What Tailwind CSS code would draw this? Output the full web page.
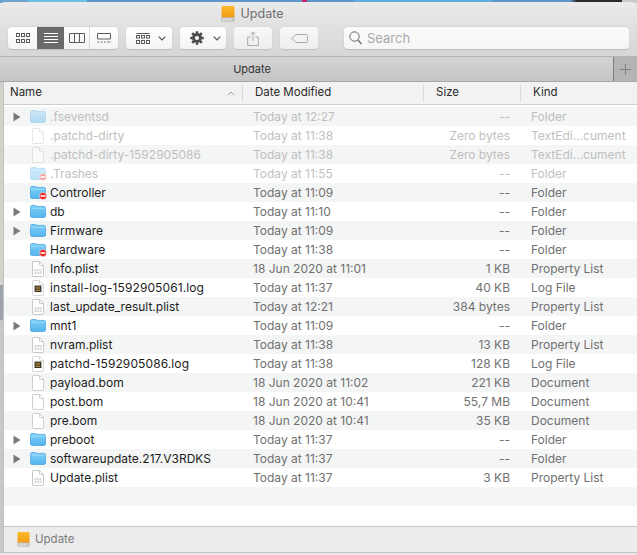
<!DOCTYPE html>
<html><head><meta charset="utf-8"><script src="https://cdn.jsdelivr.net/npm/@tailwindcss/browser@4"></script></head>
<body class="m-0 overflow-hidden">
<svg class="absolute w-0 h-0">
<defs>
<linearGradient id="fg" x1="0" y1="0" x2="0" y2="1"><stop offset="0" stop-color="#7fd0f8"/><stop offset="1" stop-color="#55b4ee"/></linearGradient>
<linearGradient id="dg" x1="0" y1="0" x2="0" y2="1"><stop offset="0" stop-color="#fbb92c"/><stop offset="1" stop-color="#f39a12"/></linearGradient>
<symbol id="folder" viewBox="0 0 16 13"><path d="M.5 2.2C.5 1 1.2.5 2 .5h3.6c.8 0 1 .9 1.9.9H14c1 0 1.5.6 1.5 1.5v8.2c0 .9-.6 1.4-1.5 1.4H2c-.9 0-1.5-.5-1.5-1.4z" fill="url(#fg)" stroke="#3f9edb" stroke-width=".7"/><path d="M.8 3.3h14.4" stroke="#a5e0fb" stroke-width=".8"/></symbol>
<symbol id="doc" viewBox="0 0 12 16"><path d="M.5 1.2c0-.4.3-.7.7-.7h6.3l4 4v10.3c0 .4-.3.7-.7.7H1.2c-.4 0-.7-.3-.7-.7z" fill="#fff" stroke="#cfcfcf"/><path d="M7.5.5v3.2c0 .5.3.8.8.8h3.2" fill="none" stroke="#cfcfcf"/></symbol>
<symbol id="plist" viewBox="0 0 12 16"><path d="M.5 1.2c0-.4.3-.7.7-.7h6.3l4 4v10.3c0 .4-.3.7-.7.7H1.2c-.4 0-.7-.3-.7-.7z" fill="#fff" stroke="#c8c8c8"/><path d="M7.5.5v3.2c0 .5.3.8.8.8h3.2" fill="none" stroke="#c8c8c8"/><path d="M2.5 8h7v5h-7z" fill="#d9d9d9"/><path d="M2.5 10.5h7M5 8v5M7.3 8v5" stroke="#fff" stroke-width=".6"/></symbol>
<symbol id="log" viewBox="0 0 12 16"><path d="M.5 1.2c0-.4.3-.7.7-.7h6.3l4 4v10.3c0 .4-.3.7-.7.7H1.2c-.4 0-.7-.3-.7-.7z" fill="#fff" stroke="#d8d8d8"/><path d="M7.5.5v3.2c0 .5.3.8.8.8h3.2" fill="none" stroke="#d8d8d8"/><rect x="2.6" y="5.6" width="6.8" height="6.4" fill="#2b2925"/><path d="M3.6 7.2h4.8M3.6 8.9h4.8M3.6 10.6h4.8" stroke="#c9a33a" stroke-width=".9"/></symbol>
<symbol id="badge" viewBox="0 0 8 8"><circle cx="4" cy="4" r="3.6" fill="#e8211d" stroke="#fff" stroke-width=".5"/><rect x="1.6" y="3.2" width="4.8" height="1.6" fill="#fff"/></symbol>
<symbol id="tri" viewBox="0 0 8 10"><path d="M.5 .5 7.5 5 .5 9.5z" fill="#7b7b7b"/></symbol>
<symbol id="drive" viewBox="0 0 14 16"><rect x=".5" y="0" width="13" height="12.5" rx="1.6" fill="url(#dg)"/><path d="M.5 11.5h13v3c0 .8-.5 1.3-1.2 1.3H1.7c-.7 0-1.2-.5-1.2-1.3z" fill="#d6d6d6" stroke="#aaa" stroke-width=".5"/><circle cx="11.4" cy="13.8" r=".7" fill="#6fc05a"/></symbol>
<symbol id="g9" viewBox="0 0 14 10"><g fill="none" stroke="#5c5c5c"><rect x=".5" y=".5" width="3" height="3"/><rect x="5.5" y=".5" width="3" height="3"/><rect x="10.5" y=".5" width="3" height="3"/><rect x=".5" y="6.5" width="3" height="3"/><rect x="5.5" y="6.5" width="3" height="3"/><rect x="10.5" y="6.5" width="3" height="3"/></g></symbol>
</defs>
</svg>

<div class="relative w-[637px] h-[555px] flex flex-col overflow-hidden bg-[#e7e7e7] font-['Inter','Liberation_Sans',sans-serif] text-[12px] leading-none">
  <div class="h-[3px] shrink-0 bg-[linear-gradient(90deg,#6da3cc_0,#6da3cc_28px,#6cc0e6_28px,#6cc0e6_87px,#5f97c9_87px,#5f97c9_302px,#c8256e_302px,#c8256e_307px,#5f97c9_307px,#5f97c9_355px,#63aedc_355px,#63aedc_492px,#5f97c9_492px,#5f97c9_570px,#2a2a2a_577px,#2a2a2a_622px,#c9c9c9_622px)]"></div>

  <div class="-mt-px rounded-t-[5px] shrink-0 h-[55px] bg-[linear-gradient(#eaeaea,#d6d6d6)] border-b border-[#b4b4b4] relative">
    <div class="absolute left-0 right-0 top-[3px] flex justify-center items-center gap-[6px] pr-[133px] h-[18px]">
      <svg class="w-[14px] h-[16px]"><use href="#drive"/></svg>
      <span class="text-[12.5px] text-[#707070]">Update</span>
    </div>
    <div class="absolute left-[8px] right-[8px] top-[25px] flex h-[23px] gap-[8px]">
      <div class="w-[110px] h-full flex rounded-[4px] overflow-hidden bg-[linear-gradient(#ffffff,#f4f4f4)] border-b border-[#bdbdbd] shadow-[0_0_0_0.5px_#cfcfcf]">
        <div class="w-[29px] flex items-center justify-center"><svg class="w-[14px] h-[10px]"><use href="#g9"/></svg></div>
        <div class="w-[27px] flex items-center justify-center bg-[#6b6b6b]"><svg class="w-[14px] h-[10px]" viewBox="0 0 14 10"><path d="M0 .5h14M0 3.5h14M0 6.5h14M0 9.5h14" stroke="#fff"/></svg></div>
        <div class="w-[26px] flex items-center justify-center border-r border-[#d8d8d8]"><svg class="w-[16px] h-[10px]" viewBox="0 0 16 10"><path d="M.5.5h15v9H.5zM5.5.5v9M10.5.5v9" fill="none" stroke="#5c5c5c"/></svg></div>
        <div class="flex-1 flex items-center justify-center"><svg class="w-[14px] h-[10px]" viewBox="0 0 14 10"><path d="M.5.5h13v5.5H.5z" fill="none" stroke="#5c5c5c"/><path d="M.5 9h1.6M3.7 9h1.6M6.9 9h1.6M10.1 9h1.6M12.4 9h1.2" stroke="#5c5c5c"/></svg></div>
      </div>
      <div class="w-[46px] h-full flex items-center gap-[8px] pl-[10px] rounded-[4px] bg-[linear-gradient(#ffffff,#f4f4f4)] border-b border-[#bdbdbd] shadow-[0_0_0_0.5px_#cfcfcf]">
        <svg class="w-[14px] h-[12px]" viewBox="0 0 14 12"><g fill="none" stroke="#5c5c5c"><path d="M.5 1.5h13" /><rect x=".5" y="3.5" width="3" height="2.5"/><rect x="5.5" y="3.5" width="3" height="2.5"/><rect x="10.5" y="3.5" width="3" height="2.5"/><rect x=".5" y="8.5" width="3" height="3"/><rect x="5.5" y="8.5" width="3" height="3"/><rect x="10.5" y="8.5" width="3" height="3"/></g></svg>
        <svg class="w-[8px] h-[5px]" viewBox="0 0 8 5"><path d="M.7.7 4 4l3.3-3.3" fill="none" stroke="#555" stroke-width="1.2"/></svg>
      </div>
      <div class="w-[46px] h-full flex items-center gap-[9px] pl-[10px] rounded-[4px] bg-[linear-gradient(#ffffff,#f4f4f4)] border-b border-[#bdbdbd] shadow-[0_0_0_0.5px_#cfcfcf]">
        <svg class="w-[14px] h-[14px]" viewBox="0 0 14 14"><circle cx="7" cy="7" r="3.5" fill="none" stroke="#4c4c4c" stroke-width="2.8"/><path d="M7 .2v13.6M.2 7h13.6M2.2 2.2l9.6 9.6M11.8 2.2l-9.6 9.6" stroke="#4c4c4c" stroke-width="2.6" stroke-dasharray="2.6 8.6 2.8"/></svg>
        <svg class="w-[8px] h-[5px]" viewBox="0 0 8 5"><path d="M.7.7 4 4l3.3-3.3" fill="none" stroke="#555" stroke-width="1.2"/></svg>
      </div>
      <div class="w-[38px] h-full flex items-center justify-center rounded-[4px] bg-[linear-gradient(#f8f8f8,#eeeeee)] border-b border-[#c4c4c4] shadow-[0_0_0_0.5px_#d4d4d4]">
        <svg class="w-[12px] h-[15px]" viewBox="0 0 12 15"><path d="M3.5 6H.7v8.5h10.6V6H8.5M6 10V1M3.6 3.2 6 .8l2.4 2.4" fill="none" stroke="#ababab"/></svg>
      </div>
      <div class="w-[38px] h-full flex items-center justify-center rounded-[4px] bg-[linear-gradient(#f8f8f8,#eeeeee)] border-b border-[#c4c4c4] shadow-[0_0_0_0.5px_#d4d4d4]">
        <svg class="w-[17px] h-[9px]" viewBox="0 0 17 9"><path d="M5 .5h10.5c.6 0 1 .4 1 1v6c0 .6-.4 1-1 1H5L.8 4.5z" fill="none" stroke="#ababab"/></svg>
      </div>
      <div class="ml-[18px] flex-1 h-full flex items-center gap-[5px] pl-[5px] rounded-[4px] bg-[linear-gradient(#fafafa,#f6f6f6)] border-b border-[#bdbdbd] shadow-[0_0_0_0.5px_#cfcfcf]">
        <svg class="w-[13px] h-[14px]" viewBox="0 0 13 14"><circle cx="5.5" cy="5.5" r="4.7" fill="none" stroke="#666"/><path d="m9 9 3.4 4" stroke="#666" stroke-width="1.2"/></svg>
        <span class="text-[13px] text-[#a9a9a9]">Search</span>
      </div>
    </div>
  </div>

  <div class="shrink-0 h-[25px] flex bg-[linear-gradient(#d4d4d4,#c5c5c5)] border-b border-[#a8a8a8]">
    <div class="w-[613px] flex items-center justify-center pr-[109px] text-[11px] text-[#333]"><span>Update</span></div>
    <div class="flex-1 flex items-center justify-center bg-[#b5b5b5] border-l border-[#7c7c7c]"><svg class="w-[11px] h-[11px]" viewBox="0 0 11 11"><path d="M5.5 0v11M0 5.5h11" stroke="#7f7f7f"/></svg></div>
  </div>

  <div class="flex flex-1 min-h-0">
    <div class="w-[3px] shrink-0 flex flex-col">
      <div class="h-[203px] bg-[#d2d1cc]"></div>
      <div class="h-[35px] bg-[#9ea3aa]"></div>
      <div class="flex-1 bg-[#c6c8cc]"></div>
    </div>
    <div class="flex-1 flex flex-col border-l border-[#c2c2c2] bg-white min-w-0">
      <div class="shrink-0 h-[23px] flex items-center bg-[#f2f2f2] border-b border-[#cdcdcd] text-[#2a2a2a] text-[11.5px]">
        <div class="w-[239px] h-[17px] flex items-center justify-between pl-[6px] pr-[7px] border-r border-[#d8d8d8]"><span>Name</span><svg class="w-[8px] h-[5px]" viewBox="0 0 8 5"><path d="M.7 4.3 4 1l3.3 3.3" fill="none" stroke="#a6a6a6"/></svg></div>
        <div class="w-[181px] h-[17px] flex items-center pl-[12px] border-r border-[#d8d8d8]">Date Modified</div>
        <div class="w-[97px] h-[17px] flex items-center pl-[12px] border-r border-[#d8d8d8]">Size</div>
        <div class="pl-[12px]">Kind</div>
      </div>
      <div class="h-[2px] shrink-0"></div>
      <div class="flex-1 min-h-0 flex flex-col text-[#bfbfbf]">
        <div class="h-[19px] flex items-center bg-[#f4f5f5]"><div class="w-[26px] pl-[9px]"><svg class="w-[8px] h-[10px] block"><use href="#tri"/></svg></div><div class="w-[20px] opacity-40"><svg class="w-[16px] h-[13px] block"><use href="#folder"/></svg></div><div class="w-[193px]">.fseventsd</div><div class="w-[181px] pl-[10px]">Today at 12:27</div><div class="w-[86px] text-right">--</div><div class="pl-[21px]">Folder</div></div>
        <div class="h-[19px] flex items-center"><div class="w-[26px]"></div><div class="w-[20px] pl-[2px] opacity-50"><svg class="w-[12px] h-[16px] block"><use href="#doc"/></svg></div><div class="w-[193px]">.patchd-dirty</div><div class="w-[181px] pl-[10px]">Today at 11:38</div><div class="w-[86px] text-right">Zero bytes</div><div class="pl-[21px]">TextEdi...cument</div></div>
        <div class="h-[19px] flex items-center bg-[#f4f5f5]"><div class="w-[26px]"></div><div class="w-[20px] pl-[2px] opacity-50"><svg class="w-[12px] h-[16px] block"><use href="#doc"/></svg></div><div class="w-[193px]">.patchd-dirty-1592905086</div><div class="w-[181px] pl-[10px]">Today at 11:38</div><div class="w-[86px] text-right">Zero bytes</div><div class="pl-[21px]">TextEdi...cument</div></div>
        <div class="h-[19px] flex items-center"><div class="w-[26px]"></div><div class="w-[20px] relative opacity-40"><svg class="w-[16px] h-[13px] block"><use href="#folder"/></svg><svg class="absolute left-[9px] top-[6px] w-[8px] h-[8px]"><use href="#badge"/></svg></div><div class="w-[193px]">.Trashes</div><div class="w-[181px] pl-[10px]">Today at 11:55</div><div class="w-[86px] text-right">--</div><div class="pl-[21px]">Folder</div></div>
        <div class="h-[19px] flex items-center bg-[#f4f5f5] text-[#707070]"><div class="w-[26px]"></div><div class="w-[20px] relative"><svg class="w-[16px] h-[13px] block"><use href="#folder"/></svg><svg class="absolute left-[9px] top-[6px] w-[8px] h-[8px]"><use href="#badge"/></svg></div><div class="w-[193px] text-[#1c1c1c]">Controller</div><div class="w-[181px] pl-[10px]">Today at 11:09</div><div class="w-[86px] text-right">--</div><div class="pl-[21px]">Folder</div></div>
        <div class="h-[19px] flex items-center text-[#707070]"><div class="w-[26px] pl-[9px]"><svg class="w-[8px] h-[10px] block"><use href="#tri"/></svg></div><div class="w-[20px]"><svg class="w-[16px] h-[13px] block"><use href="#folder"/></svg></div><div class="w-[193px] text-[#1c1c1c]">db</div><div class="w-[181px] pl-[10px]">Today at 11:10</div><div class="w-[86px] text-right">--</div><div class="pl-[21px]">Folder</div></div>
        <div class="h-[19px] flex items-center bg-[#f4f5f5] text-[#707070]"><div class="w-[26px] pl-[9px]"><svg class="w-[8px] h-[10px] block"><use href="#tri"/></svg></div><div class="w-[20px]"><svg class="w-[16px] h-[13px] block"><use href="#folder"/></svg></div><div class="w-[193px] text-[#1c1c1c]">Firmware</div><div class="w-[181px] pl-[10px]">Today at 11:09</div><div class="w-[86px] text-right">--</div><div class="pl-[21px]">Folder</div></div>
        <div class="h-[19px] flex items-center text-[#707070]"><div class="w-[26px]"></div><div class="w-[20px] relative"><svg class="w-[16px] h-[13px] block"><use href="#folder"/></svg><svg class="absolute left-[9px] top-[6px] w-[8px] h-[8px]"><use href="#badge"/></svg></div><div class="w-[193px] text-[#1c1c1c]">Hardware</div><div class="w-[181px] pl-[10px]">Today at 11:38</div><div class="w-[86px] text-right">--</div><div class="pl-[21px]">Folder</div></div>
        <div class="h-[19px] flex items-center bg-[#f4f5f5] text-[#707070]"><div class="w-[26px]"></div><div class="w-[20px] pl-[2px]"><svg class="w-[12px] h-[16px] block"><use href="#plist"/></svg></div><div class="w-[193px] text-[#1c1c1c]">Info.plist</div><div class="w-[181px] pl-[10px]">18 Jun 2020 at 11:01</div><div class="w-[86px] text-right">1 KB</div><div class="pl-[21px]">Property List</div></div>
        <div class="h-[19px] flex items-center text-[#707070]"><div class="w-[26px]"></div><div class="w-[20px] pl-[2px]"><svg class="w-[12px] h-[16px] block"><use href="#log"/></svg></div><div class="w-[193px] text-[#1c1c1c] tracking-[0.1px]">install-log-1592905061.log</div><div class="w-[181px] pl-[10px]">Today at 11:37</div><div class="w-[86px] text-right">40 KB</div><div class="pl-[21px]">Log File</div></div>
        <div class="h-[19px] flex items-center bg-[#f4f5f5] text-[#707070]"><div class="w-[26px]"></div><div class="w-[20px] pl-[2px]"><svg class="w-[12px] h-[16px] block"><use href="#plist"/></svg></div><div class="w-[193px] text-[#1c1c1c]">last_update_result.plist</div><div class="w-[181px] pl-[10px]">Today at 12:21</div><div class="w-[86px] text-right">384 bytes</div><div class="pl-[21px]">Property List</div></div>
        <div class="h-[19px] flex items-center text-[#707070]"><div class="w-[26px] pl-[9px]"><svg class="w-[8px] h-[10px] block"><use href="#tri"/></svg></div><div class="w-[20px]"><svg class="w-[16px] h-[13px] block"><use href="#folder"/></svg></div><div class="w-[193px] text-[#1c1c1c]">mnt1</div><div class="w-[181px] pl-[10px]">Today at 11:09</div><div class="w-[86px] text-right">--</div><div class="pl-[21px]">Folder</div></div>
        <div class="h-[19px] flex items-center bg-[#f4f5f5] text-[#707070]"><div class="w-[26px]"></div><div class="w-[20px] pl-[2px]"><svg class="w-[12px] h-[16px] block"><use href="#plist"/></svg></div><div class="w-[193px] text-[#1c1c1c]">nvram.plist</div><div class="w-[181px] pl-[10px]">Today at 11:38</div><div class="w-[86px] text-right">13 KB</div><div class="pl-[21px]">Property List</div></div>
        <div class="h-[19px] flex items-center text-[#707070]"><div class="w-[26px]"></div><div class="w-[20px] pl-[2px]"><svg class="w-[12px] h-[16px] block"><use href="#log"/></svg></div><div class="w-[193px] text-[#1c1c1c] tracking-[0.1px]">patchd-1592905086.log</div><div class="w-[181px] pl-[10px]">Today at 11:38</div><div class="w-[86px] text-right">128 KB</div><div class="pl-[21px]">Log File</div></div>
        <div class="h-[19px] flex items-center bg-[#f4f5f5] text-[#707070]"><div class="w-[26px]"></div><div class="w-[20px] pl-[2px]"><svg class="w-[12px] h-[16px] block"><use href="#doc"/></svg></div><div class="w-[193px] text-[#1c1c1c]">payload.bom</div><div class="w-[181px] pl-[10px]">18 Jun 2020 at 11:02</div><div class="w-[86px] text-right">221 KB</div><div class="pl-[21px]">Document</div></div>
        <div class="h-[19px] flex items-center text-[#707070]"><div class="w-[26px]"></div><div class="w-[20px] pl-[2px]"><svg class="w-[12px] h-[16px] block"><use href="#doc"/></svg></div><div class="w-[193px] text-[#1c1c1c]">post.bom</div><div class="w-[181px] pl-[10px]">18 Jun 2020 at 10:41</div><div class="w-[86px] text-right">55,7 MB</div><div class="pl-[21px]">Document</div></div>
        <div class="h-[19px] flex items-center bg-[#f4f5f5] text-[#707070]"><div class="w-[26px]"></div><div class="w-[20px] pl-[2px]"><svg class="w-[12px] h-[16px] block"><use href="#doc"/></svg></div><div class="w-[193px] text-[#1c1c1c]">pre.bom</div><div class="w-[181px] pl-[10px]">18 Jun 2020 at 10:41</div><div class="w-[86px] text-right">35 KB</div><div class="pl-[21px]">Document</div></div>
        <div class="h-[19px] flex items-center text-[#707070]"><div class="w-[26px] pl-[9px]"><svg class="w-[8px] h-[10px] block"><use href="#tri"/></svg></div><div class="w-[20px]"><svg class="w-[16px] h-[13px] block"><use href="#folder"/></svg></div><div class="w-[193px] text-[#1c1c1c]">preboot</div><div class="w-[181px] pl-[10px]">Today at 11:37</div><div class="w-[86px] text-right">--</div><div class="pl-[21px]">Folder</div></div>
        <div class="h-[19px] flex items-center bg-[#f4f5f5] text-[#707070]"><div class="w-[26px] pl-[9px]"><svg class="w-[8px] h-[10px] block"><use href="#tri"/></svg></div><div class="w-[20px]"><svg class="w-[16px] h-[13px] block"><use href="#folder"/></svg></div><div class="w-[193px] text-[#1c1c1c]">softwareupdate.217.V3RDKS</div><div class="w-[181px] pl-[10px]">Today at 11:37</div><div class="w-[86px] text-right">--</div><div class="pl-[21px]">Folder</div></div>
        <div class="h-[19px] flex items-center text-[#707070]"><div class="w-[26px]"></div><div class="w-[20px] pl-[2px]"><svg class="w-[12px] h-[16px] block"><use href="#plist"/></svg></div><div class="w-[193px] text-[#1c1c1c]">Update.plist</div><div class="w-[181px] pl-[10px]">Today at 11:37</div><div class="w-[86px] text-right">3 KB</div><div class="pl-[21px]">Property List</div></div>
        <div class="h-[19px] bg-[#f4f5f5]"></div>
        <div class="h-[19px]"></div>
      </div>
      <div class="shrink-0 h-[26px] flex items-center gap-[5px] pl-[13px] border-t border-[#c8c8c8] bg-[#ececec] text-[#7d7d7d] text-[11.5px]">
        <svg class="w-[13px] h-[15px]"><use href="#drive"/></svg><span>Update</span>
      </div>
    </div>
  </div>
  <div class="h-[3px] shrink-0 bg-[#e9e9e9] border-t border-[#c4c4c4]"></div>
</div>
</body></html>
